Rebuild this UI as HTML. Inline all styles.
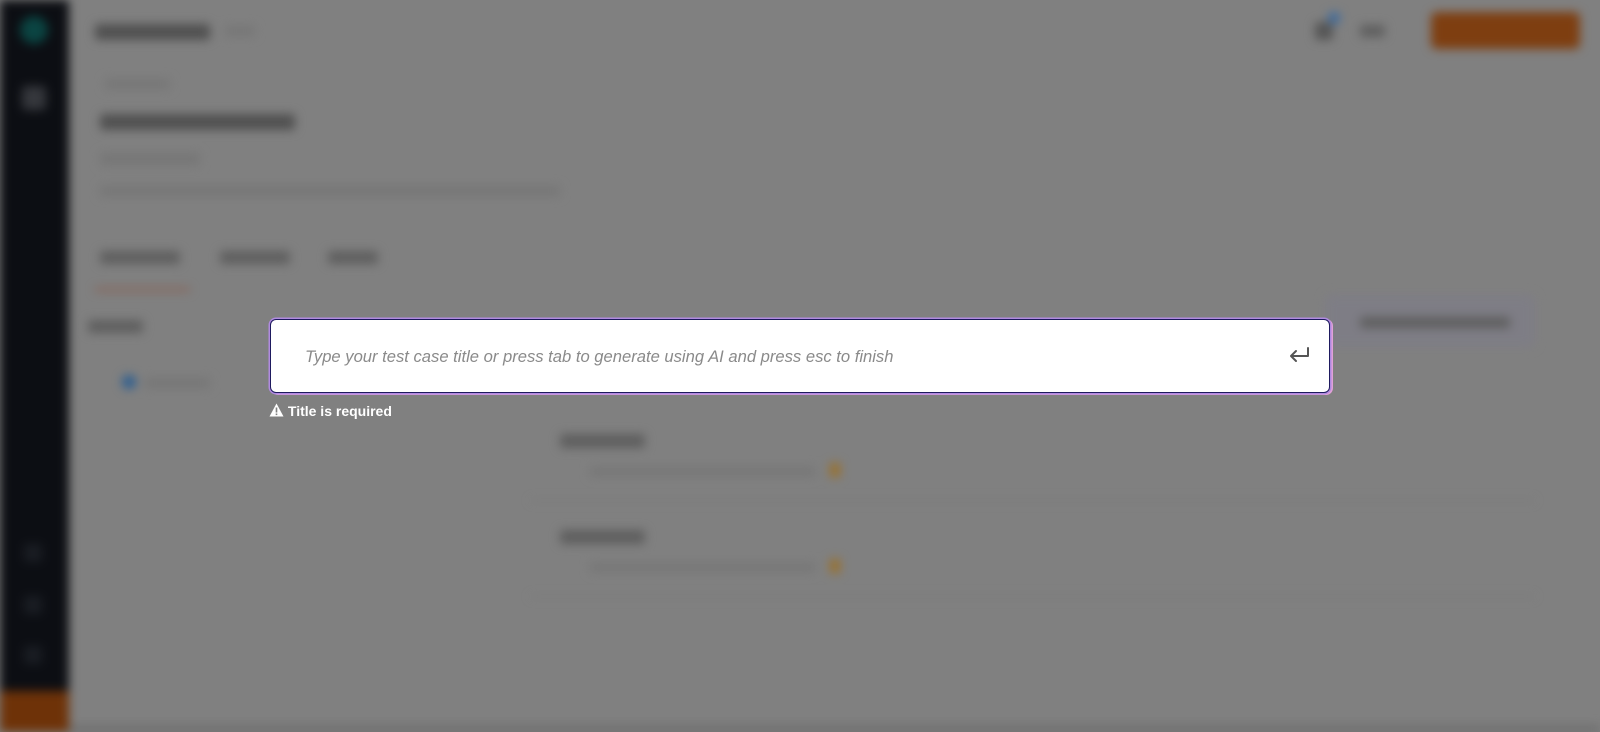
<!DOCTYPE html>
<html><head><meta charset="utf-8"><style>
*{margin:0;padding:0;box-sizing:border-box}
body{width:1600px;height:732px;overflow:hidden;background:#808080;font-family:"Liberation Sans",sans-serif;position:relative}
.bg{position:absolute;inset:0;filter:blur(5px)}
.sb{position:absolute;left:0;top:0;width:69px;height:732px;background:#0c0e13}
.b{position:absolute;background:#5e5e5e;border-radius:3px}
.l{position:absolute;background:#767676;border-radius:2px}
.modal{position:absolute;left:270px;top:319px;width:1060px;height:74px;background:#fff;border:1.5px solid #1e1a5e;border-radius:6px;box-shadow:0 0 0 1.5px #b08ae0,2px 1px 0 1px #e0a0d8}
.ph{position:absolute;left:34px;top:27px;font-style:italic;font-size:16.6px;color:#8a8a8a;white-space:nowrap}
.err{position:absolute;left:269px;top:403px;color:#fff;font-weight:bold;font-size:14px}
</style></head><body>
<div class="bg">
 <div class="sb"></div>
 <div style="position:absolute;left:20px;top:16px;width:28px;height:28px;border-radius:50%;background:#0b4442"></div>
 <div style="position:absolute;left:22px;top:86px;width:24px;height:24px;border-radius:4px;background:#35373c"></div>
 <div style="position:absolute;left:24px;top:544px;width:18px;height:18px;background:#1a1d23"></div>
 <div style="position:absolute;left:24px;top:596px;width:18px;height:18px;background:#1a1d23"></div>
 <div style="position:absolute;left:24px;top:646px;width:18px;height:18px;background:#1a1d23"></div>
 <div style="position:absolute;left:0;top:691px;width:69px;height:41px;background:#6e3208"></div>
 <div style="position:absolute;left:69px;top:726px;width:1531px;height:6px;background:#6a6a6a"></div>
 <div class="b" style="left:95px;top:24px;width:115px;height:16px;background:#505050"></div>
 <div class="l" style="left:225px;top:26px;width:30px;height:10px"></div>
 <div class="l" style="left:105px;top:79px;width:65px;height:10px"></div>
 <div class="b" style="left:100px;top:114px;width:195px;height:16px;background:#505050"></div>
 <div class="l" style="left:100px;top:153px;width:100px;height:12px"></div>
 <div class="l" style="left:100px;top:186px;width:460px;height:10px"></div>
 <div class="b" style="left:100px;top:251px;width:80px;height:13px"></div>
 <div class="b" style="left:220px;top:251px;width:70px;height:13px"></div>
 <div class="b" style="left:328px;top:251px;width:50px;height:13px"></div>
 <div style="position:absolute;left:95px;top:288px;width:95px;height:3px;background:#8a5a4a"></div>
 <div class="b" style="left:88px;top:320px;width:55px;height:13px"></div>
 <div style="position:absolute;left:122px;top:375px;width:14px;height:14px;border-radius:50%;background:#2b5d90"></div>
 <div class="l" style="left:145px;top:378px;width:65px;height:10px"></div>
 <div style="position:absolute;left:1325px;top:295px;width:210px;height:52px;border-radius:6px;background:#7e7d85"></div>
 <div class="b" style="left:1360px;top:317px;width:150px;height:11px"></div>
 <div style="position:absolute;left:1431px;top:12px;width:149px;height:37px;border-radius:6px;background:#7e3e10"></div>
 <div style="position:absolute;left:1315px;top:22px;width:18px;height:18px;background:#555;border-radius:3px"></div>
 <div style="position:absolute;left:1328px;top:12px;width:12px;height:12px;border-radius:50%;background:#3a6aa0"></div>
 <div class="b" style="left:1360px;top:25px;width:25px;height:12px"></div>
 <div class="b" style="left:560px;top:434px;width:85px;height:14px"></div>
 <div class="l" style="left:590px;top:467px;width:225px;height:9px"></div>
 <div style="position:absolute;left:830px;top:463px;width:10px;height:14px;background:#9a7028"></div>
 <div class="b" style="left:560px;top:530px;width:85px;height:14px"></div>
 <div class="l" style="left:590px;top:563px;width:225px;height:9px"></div>
 <div style="position:absolute;left:830px;top:559px;width:10px;height:14px;background:#9a7028"></div>
 <div style="position:absolute;left:530px;top:500px;width:1005px;height:1px;background:#747474"></div>
 <div style="position:absolute;left:530px;top:596px;width:1005px;height:1px;background:#747474"></div>
</div>
<div class="modal">
 <div class="ph">Type your test case title or press tab to generate using AI and press esc to finish</div>
 <svg style="position:absolute;right:18px;top:26px" width="24" height="18" viewBox="0 0 24 18"><path d="M21 2v8H4M9 5l-5 5 5 5" fill="none" stroke="#555" stroke-width="2" stroke-linecap="round" stroke-linejoin="round"/></svg>
</div>
<div class="err"><svg width="15" height="14" viewBox="0 0 15 14" style="vertical-align:-1px"><path d="M7.5 0.5L14.5 13.5H0.5Z" fill="#fff"/><rect x="6.7" y="4.5" width="1.6" height="5" fill="#808080"/><rect x="6.7" y="10.5" width="1.6" height="1.6" fill="#808080"/></svg> Title is required</div>
</body></html>
